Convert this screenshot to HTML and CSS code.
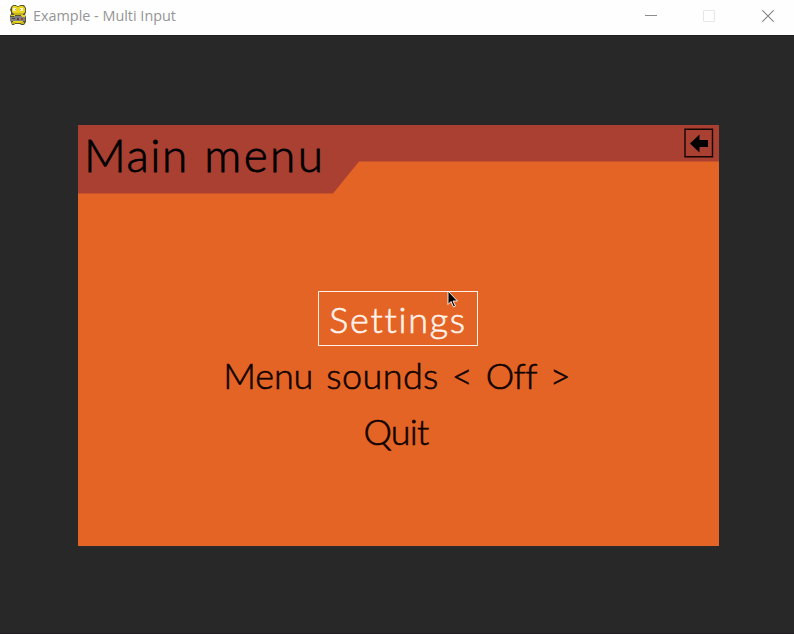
FILE: index.html
```html
<!DOCTYPE html>
<html lang="en">
<head>
<meta charset="utf-8">
<title>Example - Multi Input</title>
<link rel="stylesheet" href="styles.css">
</head>
<body>
<header class="titlebar">
  <svg class="app-icon" width="18" height="20" viewBox="0 0 18 20">
    <path fill="#5a5430" d="M4 0h3l1 1h2l1-1h4l2 3v4l-1 3 1 2v5l-2 3h-3l-1-1H6l-1 1H3l-1-3-1-2v-4l1-2V7L1 5l1-3z"/>
    <path fill="#e8d51c" d="M4 1h3l2 1 2-1h3l2 2v4l-2 2H5L3 7V3zM2 10h4v1H2zM12 10h4v2h-4zM4 15.500h10V18H4z"/>
    <path fill="#c4b120" d="M5 8h9v2H5zM3 17h3v2H3zM12 17h3v2h-3z"/>
    <path fill="#f8f3d5" d="M4 3h3v3H4zM11 3h3v3h-3z"/>
    <path fill="#a39f7f" d="M6 4h1v1H6zM11 4h1v1h-1z"/>
    <path fill="#858080" d="M1 12h4v-1h8v1h3v4H1z"/>
    <path fill="#4b4347" d="M3 13h3v1H3zM8 13h2v2H8z"/>
    <path fill="#a43f39" d="M12 13h2v2h-2z"/>
  </svg>
  <h1 class="window-title">Example - Multi Input</h1>
  <div class="window-controls">
    <svg width="12" height="12" viewBox="0 0 12 12"><path d="M0 5.500h12" stroke="#8c8c8c"/></svg>
    <svg width="12" height="12" viewBox="0 0 12 12"><path d="M.5.5h11v11H.5z" fill="none" stroke="#e7e7e7"/></svg>
    <svg width="12" height="12" viewBox="0 0 12 12"><path d="M.3.3l11.4 11.4M11.7.3L.3 11.7" stroke="#858585" stroke-width="1.1"/></svg>
  </div>
</header>
<main class="stage">
  <section class="panel">
    <div class="panel-head">
      <svg class="head-shape" width="641" height="69" viewBox="0 0 641 69"><path d="M0 0h641v36.500H281L255 68.500H0z" fill="#a94032"/></svg>
      <h2 class="panel-title"><span class="t-main">Main</span><span class="t-menu">menu</span></h2>
      <button class="back" aria-label="Back">
        <svg width="30" height="30" viewBox="0 0 30 30"><path d="M1 1.300h27.500v27.500H1z" fill="none" stroke="#140503" stroke-width="1.400"/><path d="M6 15.500L15.500 6.500V12H24v7h-8.500v5.500z" fill="#000"/></svg>
      </button>
    </div>
    <nav class="menu">
      <div class="item selected"><span class="settings">Settings</span></div>
      <div class="item sounds"><span class="w-menu">Menu</span><span class="w-sounds">sounds</span><span>&lt;</span><span class="w-off">Off</span><span>&gt;</span></div>
      <div class="item"><span class="quit">Quit</span></div>
    </nav>
    <svg class="cursor" width="12" height="19" viewBox="0 0 12 19"><path d="M1 1v13.500l3-3 2.500 5.500 2-1-2.500-5h4.500z" fill="#000" stroke="#fff" stroke-width=".9"/></svg>
  </section>
</main>
</body>
</html>
```

FILE: styles.css
```css
* { box-sizing: border-box; }
body {
  margin: 0;
  height: 634px;
  overflow: hidden;
  display: flex;
  flex-direction: column;
  background: #282828;
}
.titlebar {
  height: 35px;
  flex: none;
  display: flex;
  align-items: center;
  padding: 0 20px 4px 9px;
  background: #fefefe;
}
.app-icon { margin-top: -1px; }
.window-title {
  margin: 0 0 1px 6px;
  font: 400 14.4px "Open Sans", sans-serif;
  color: #959595;
}
.window-controls {
  margin-left: auto;
  display: grid;
  grid-template-columns: 58px 59px 12px;
}
.stage {
  flex: 1;
  padding: 89px 75px 0 78px;
  border-top: 1px solid #202020;
  border-bottom: 1px solid #211b22;
}
.panel {
  position: relative;
  width: 641px;
  height: 421px;
  background: #e46425;
  font-family: "Lato", sans-serif;
  font-weight: 300;
}
.panel-head {
  position: relative;
  height: 69px;
  display: flex;
  justify-content: space-between;
  padding: 0 5px 0 6px;
}
.head-shape { position: absolute; left: 0; top: 0; width: 100%; }
.panel-title {
  position: relative;
  margin: 2px 0 0;
  display: flex;
  gap: 15.500px;
  font-size: 46px;
  line-height: 56px;
  font-weight: 300;
  color: #000;
  -webkit-text-stroke: .8px currentColor;
}
.t-main { letter-spacing: 1.500px; }
.t-menu { letter-spacing: 2.400px; }
.back {
  position: relative;
  width: 30px;
  height: 30px;
  margin-top: 3px;
  padding: 0;
  border: 0;
  background: none;
}
.menu {
  margin-top: 97px;
  display: flex;
  flex-direction: column;
  align-items: center;
  padding-right: 1px;
  color: #100300;
}
.item {
  height: 56px;
  display: flex;
  align-items: center;
  font-size: 36px;
  line-height: 44px;
  white-space: nowrap;
  -webkit-text-stroke: .6px currentColor;
}
.selected {
  width: 160px;
  height: 55px;
  margin-bottom: 1px;
  justify-content: center;
  border: 1.500px solid #fff0e8;
  color: #fff2ec;
}
.settings { letter-spacing: 1.700px; }
.sounds { gap: 13px; margin-right: 2px; }
.w-menu { letter-spacing: -.1px; }
.w-sounds { letter-spacing: .4px; }
.w-off { letter-spacing: -.6px; }
.quit { letter-spacing: -.8px; margin-right: 4px; }
.cursor { position: absolute; left: 369px; top: 165px; }
```
